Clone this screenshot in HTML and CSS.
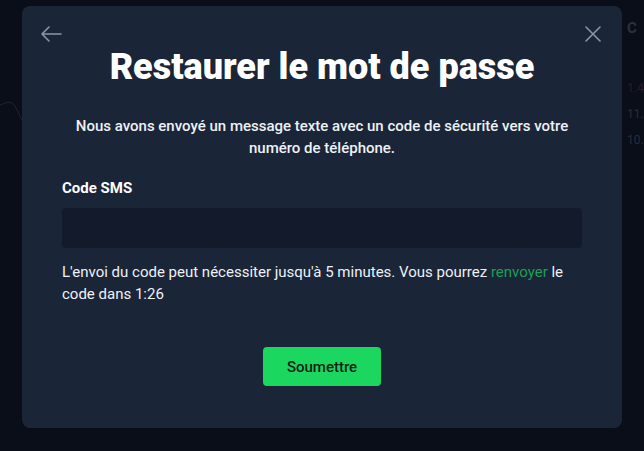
FILE: index.html
```html
<!DOCTYPE html>
<html lang="fr">
  <head>
    <meta charset="UTF-8" />
    <meta name="viewport" content="width=device-width, initial-scale=1.0" />
    <title>Restaurer le mot de passe</title>
    <link rel="stylesheet" href="styles.css">
  </head>
  <body>
    <!-- page derriere la fenetre -->
    <div class="backdrop">
      <svg class="chart" width="80" height="80" viewBox="0 0 80 80">
        <path d="M0 45 C8 42 12 40 16 48 C20 56 22 62 26 64" fill="none" stroke="#1c2433" stroke-width="1" />
      </svg>
      <div class="ticker">
        <span class="ticker-head">C</span>
        <span class="ticker-red">1.4</span>
        <span>11.</span>
        <span>10.</span>
      </div>
    </div>
    <div class="overlay">
      <div class="modal">
        <div class="modal-top">
          <a href="javascript:;" class="icon-btn">
            <svg width="22" height="16" viewBox="0 0 22 16">
              <path d="M21 8H2M9 1L2 8l7 7" fill="none" stroke="#8b95a7" stroke-width="1.6" stroke-linecap="round" stroke-linejoin="round" />
            </svg>
          </a>
          <a href="javascript:;" class="icon-btn">
            <svg width="16" height="16" viewBox="0 0 16 16">
              <path d="M1 1l14 14M15 1L1 15" fill="none" stroke="#8b95a7" stroke-width="1.6" stroke-linecap="round" />
            </svg>
          </a>
        </div>
        <h1 class="title">Restaurer le mot de passe</h1>
        <p class="lead">Nous avons envoyé un message texte avec un code de sécurité vers votre numéro de téléphone.</p>
        <label class="label" for="sms">Code SMS</label>
        <input class="field" id="sms" type="text" />
        <p class="hint">L'envoi du code peut nécessiter jusqu'à 5 minutes. Vous pourrez <a href="javascript:;" class="resend">renvoyer</a> le code dans 1:26</p>
        <div class="actions">
          <button class="submit">Soumettre</button>
        </div>
      </div>
    </div>
  </body>
</html>
```

FILE: styles.css
```css
* {
  margin: 0;
  padding: 0;
  box-sizing: border-box;
}
body {
  width: 644px;
  height: 451px;
  background-color: #0a0e18;
  font-family: Roboto, "Liberation Sans", sans-serif;
  color: #f2f4f8;
  overflow: hidden;
  position: relative;
}
.backdrop {
  position: absolute;
  left: 0;
  top: 0;
  width: 100%;
  height: 100%;
}
.backdrop .chart {
  position: absolute;
  left: 0;
  top: 60px;
}
.ticker {
  position: absolute;
  left: 627px;
  top: 18px;
  display: flex;
  flex-direction: column;
  font-size: 12px;
  line-height: 26px;
  color: #262e3d;
}
.ticker-head {
  font-weight: 700;
  font-size: 15px;
  line-height: 20px;
  margin-bottom: 37px;
  color: #2a3241;
}
.ticker-red {
  color: #2b1b24;
}
.overlay {
  position: relative;
  display: flex;
  justify-content: center;
  padding-top: 6px;
}
.modal {
  width: 600px;
  height: 422px;
  background-color: #1a2538;
  border-radius: 8px;
  padding: 0 40px;
  display: flex;
  flex-direction: column;
}
.modal-top {
  display: flex;
  justify-content: space-between;
  align-items: center;
  height: 16px;
  margin: 20px -19px 0 -22px;
}
.icon-btn {
  display: flex;
}
.title {
  font-size: 36px;
  font-weight: 900;
  text-align: center;
  line-height: 44px;
  margin-top: 3px;
  color: #ffffff;
}
.lead {
  font-size: 15px;
  font-weight: 500;
  line-height: 22px;
  text-align: center;
  margin-top: 26px;
  color: #eef1f6;
}
.label {
  font-size: 15px;
  font-weight: 700;
  margin-top: 19px;
  line-height: 20px;
  color: #ffffff;
}
.field {
  margin-top: 10px;
  height: 40px;
  width: 100%;
  background-color: #121a2b;
  border: none;
  border-radius: 4px;
  outline: none;
  color: #ffffff;
  padding: 0 12px;
  font-family: inherit;
  font-size: 14px;
}
.hint {
  margin-top: 13px;
  font-size: 15px;
  line-height: 22px;
  color: #eef1f6;
}
.resend {
  color: #1c9f57;
  text-decoration: none;
}
.actions {
  display: flex;
  justify-content: center;
  margin-top: 42px;
}
.submit {
  width: 118px;
  height: 39px;
  background-color: #1bd760;
  border: none;
  border-radius: 4px;
  font-family: inherit;
  font-size: 15px;
  font-weight: 500;
  color: #0c1f14;
}
```
